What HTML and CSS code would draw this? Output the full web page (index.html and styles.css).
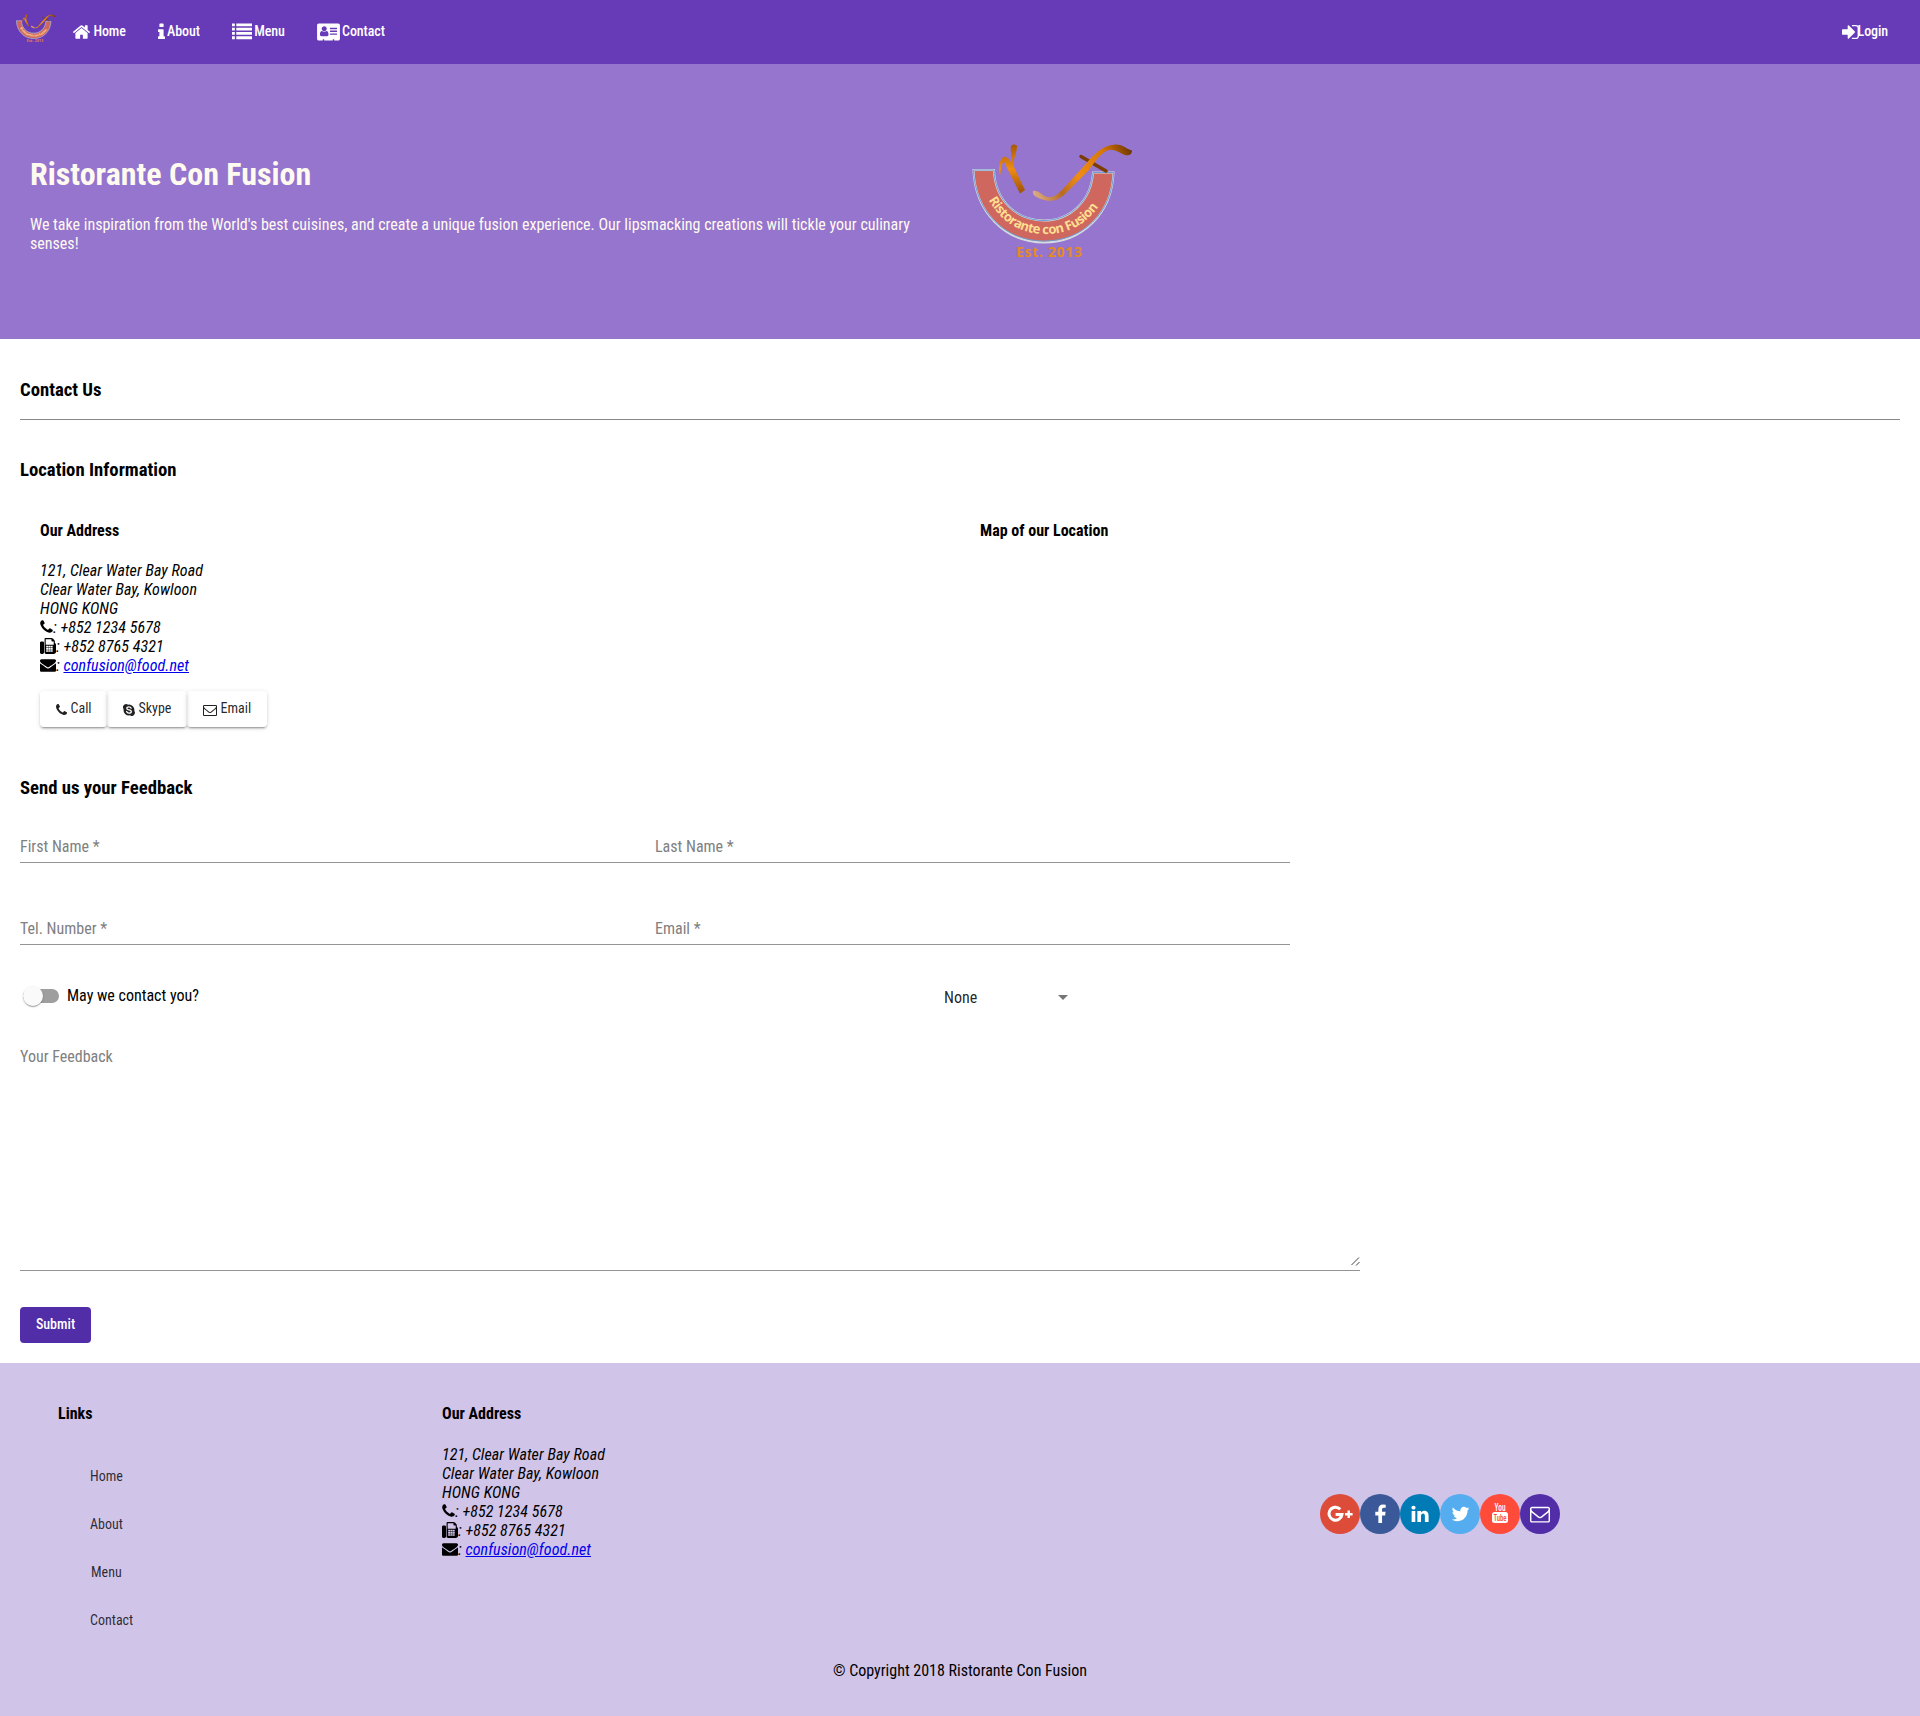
FILE: index.html
```
<!DOCTYPE html>
<html lang="en">
<head>
<meta charset="utf-8">
<title>Ristorante Con Fusion</title>
<link rel="stylesheet" href="styles.css">
</head>
<body>
<svg class="defs" aria-hidden="true">
  <defs>
    <linearGradient id="bronze" x1="0" y1="0" x2="0" y2="1"><stop offset="0" stop-color="#a85a08"/><stop offset=".5" stop-color="#ef8c12"/><stop offset="1" stop-color="#9c5008"/></linearGradient>
    <linearGradient id="handle" gradientUnits="userSpaceOnUse" x1="83" y1="66" x2="182" y2="20"><stop offset="0" stop-color="#dcb08c"/><stop offset=".25" stop-color="#b86a20"/><stop offset=".45" stop-color="#f08c14"/><stop offset=".75" stop-color="#d87808"/><stop offset="1" stop-color="#6e3400"/></linearGradient>
    <path id="arc" d="M38 69C51 92 70 104 96 104C122 104 141 91 153 69"/>
  </defs>
  <symbol id="logo" viewBox="22 13 162 117">
    <path d="M23.500 40H44C45 71 67 90.500 94 90.500C120 90.500 141 71 143 42.500H163.500C162 84 132 112.500 94 112.500C55 112.500 25 82 23.500 40Z" fill="#cf675f" stroke="#d5dbe2" stroke-width="2"/>
    <path d="M23.500 40H44C45 71 67 90.500 94 90.500C120 90.500 141 71 143 42.500H163.500C162 84 132 111 94 111C55 111 25 82 23.500 40Z" fill="none" stroke="#6f9bd0" stroke-width="1"/>
    <path d="M49 44.500C48.500 35 50 29 53.500 27C56 26 59 29 61 32C62 25 60 20 61 16C62 14 66 14 67 16C67 23 63 29 63.500 36L75 60L70 63.500L58 40L54 31.500C51.500 34 51 39 50.500 44.500Z" fill="url(#bronze)"/>
    <path d="M131 26.500L156 41" stroke="#7c3d04" stroke-width="3.500" stroke-linecap="round"/>
    <path d="M83 61C87 59.500 91 64 96 66.500C101 68.500 106 66 111 61L134 36C144 24 153 14.500 166 14.500C173 14.500 178 20 182 20.500C182 24 180 26 175 25C168 22 163 18 157 20.500C149 25 144 33 139 40L114 65C107 71.500 99 72 91 69C85 67 82 64 83 61Z" fill="url(#handle)"/>
  </symbol>
  <symbol id="home" viewBox="0 0 1792 1792"><path d="M1472 992v480q0 26-19 45t-45 19h-384v-384h-256v384h-384q-26 0-45-19t-19-45v-480q0-1 .5-3t.5-3l575-474 575 474q1 2 1 6zm223-69l-62 74q-8 9-21 11h-3q-13 0-21-7l-692-577-692 577q-12 8-24 7-13-2-21-11l-62-74q-8-10-7-23.500t11-21.500l719-599q32-26 76-26t76 26l244 204v-195q0-14 9-23t23-9h192q14 0 23 9t9 23v408l219 182q10 8 11 21.500t-7 23.500z"/></symbol>
  <symbol id="info" viewBox="576 0 640 1792"><path d="M1216 1344v128q0 26-19 45t-45 19h-512q-26 0-45-19t-19-45v-128q0-26 19-45t45-19h64v-384h-64q-26 0-45-19t-19-45v-128q0-26 19-45t45-19h384q26 0 45 19t19 45v576h64q26 0 45 19t19 45zm-128-1152v192q0 26-19 45t-45 19h-256q-26 0-45-19t-19-45v-192q0-26 19-45t45-19h256q26 0 45 19t19 45z"/></symbol>
  <symbol id="list" viewBox="0 0 1792 1792"><path d="M0 128h256v256H0zM384 128h1408v256H384zM0 512h256v256H0zM384 512h1408v256H384zM0 896h256v256H0zM384 896h1408v256H384zM0 1280h256v256H0zM384 1280h1408v256H384z"/></symbol>
  <symbol id="card" viewBox="0 0 2048 1792"><path d="M1024 1131q0-64-9-117.500t-29.500-103-60.500-78-97-28.500q-6 4-30 18t-37.500 21.500-35.500 17.500-43 14.500-42 4.500-42-4.500-43-14.500-35.500-17.500-37.500-21.500-30-18q-57 0-97 28.500t-60.500 78-29.500 103-9 117.500 37 106.500 91 42.500h512q54 0 91-42.500t37-106.500zm-157-520q0-94-66.500-160.500t-160.500-66.500-160.500 66.500-66.500 160.500 66.500 160.500 160.500 66.500 160.500-66.500 66.500-160.500zm925 509v-64q0-14-9-23t-23-9h-576q-14 0-23 9t-9 23v64q0 14 9 23t23 9h576q14 0 23-9t9-23zm0-260v-56q0-15-10.500-25.500t-25.500-10.500h-568q-15 0-25.500 10.500t-10.500 25.500v56q0 15 10.500 25.500t25.500 10.500h568q15 0 25.500-10.500t10.500-25.500zm0-252v-64q0-14-9-23t-23-9h-576q-14 0-23 9t-9 23v64q0 14 9 23t23 9h576q14 0 23-9t9-23zm256-320v1216q0 66-47 113t-113 47h-352v-96q0-14-9-23t-23-9h-64q-14 0-23 9t-9 23v96h-768v-96q0-14-9-23t-23-9h-64q-14 0-23 9t-9 23v96h-352q-66 0-113-47t-47-113v-1216q0-66 47-113t113-47h1728q66 0 113 47t47 113z"/></symbol>
  <symbol id="signin" viewBox="128 0 1536 1792"><path d="M1312 896q0 26-19 45l-544 544q-19 19-45 19t-45-19-19-45v-288h-448q-26 0-45-19t-19-45v-384q0-26 19-45t45-19h448v-288q0-26 19-45t45-19 45 19l544 544q19 19 19 45zm352-352v704q0 119-84.500 203.500t-203.500 84.500h-320q-13 0-22.500-9.500t-9.500-22.500q0-4-1-20t-.5-26.500 3-23.500 10-19.500 20.500-6.500h320q66 0 113-47t47-113v-704q0-66-47-113t-113-47h-312l-11.500-1-11.500-3-8-5.500-7-9-2-13.500q0-4-1-20t-.5-26.500 3-23.500 10-19.500 20.500-6.500h320q119 0 203.500 84.500t84.500 203.500z"/></symbol>
  <symbol id="phone" viewBox="192 0 1408 1792"><path d="M1600 1240q0 27-10 70.500t-21 68.500q-21 50-122 106-94 51-186 51-27 0-53-3.500t-57.500-12.500-47-14.500-55.500-20.500-49-18q-98-35-175-83-127-79-264-216t-216-264q-48-77-83-175-3-9-18-49t-20.500-55.500-14.500-47-12.500-57.500-3.500-53q0-92 51-186 56-101 106-122 25-11 68.500-21t70.500-10q14 0 21 3 18 6 53 76 11 19 30 54t35 63.500 31 53.500q3 4 17.500 25t21.500 35.500 7 28.500q0 20-28.500 50t-62 55-62 53-28.500 46q0 9 5 22.500t8.500 20.500 14 24 11.500 19q76 137 174 235t235 174q2 1 19 11.500t24 14 20.500 8.500 22.500 5q18 0 46-28.500t53-62 55-62 50-28.500q14 0 28.500 7t35.500 21.500 25 17.500q25 15 53.500 31t63.500 35 54 30q70 35 76 53 3 7 3 21z"/></symbol>
  <symbol id="fax" viewBox="0 0 1792 1792"><path fill-rule="evenodd" d="M160 384h128q66 0 113 47t47 113v1088q0 66-47 113t-113 47H160q-66 0-113-47T0 1632V544q0-66 47-113t113-47zM1664 546q58 34 93 93t35 129v768q0 106-75 181t-181 75H672q-66 0-113-47t-47-113V96q0-40 28-68t68-28h672q40 0 88 20t76 48l152 152q28 28 48 76t20 88zM640 128v640h896V384h-160q-40 0-68-28t-28-68V128zM690 870h220v190H690zm256 0h220v190H946zm256 0h220v190h-220zM690 1114h220v190H690zm256 0h220v190H946zm256 0h220v190h-220zM690 1358h220v190H690zm256 0h220v190H946zm256 0h220v190h-220z"/></symbol>
  <symbol id="envelope" viewBox="0 0 1792 1792"><path d="M1792 710v794q0 66-47 113t-113 47h-1472q-66 0-113-47t-47-113v-794q44 49 101 87 362 246 497 345 57 42 92.500 65.500t94.500 48 110 24.500h2q51 0 110-24.500t94.500-48 92.500-65.500q170-123 498-345 57-39 100-87zm0-294q0 79-49 151t-122 123q-376 261-468 325-10 7-42.500 31t-54 38.500-52 32.500-57.500 27-50 9h-2q-23 0-50-9t-57.500-27-52-32.500-54-38.500-42.500-31q-91-64-262-182.500t-205-142.500q-62-42-117-115.500t-55-136.500q0-78 41.500-130t118.500-52h1472q65 0 112.500 47t47.500 113z"/></symbol>
  <symbol id="envelope-o" viewBox="0 0 1792 1792"><path d="M1664 1504v-768q-32 36-69 66-268 206-426 338-51 43-83 67t-86.500 48.500-102.500 24.500h-2q-48 0-102.500-24.500t-86.500-48.500-83-67q-158-132-426-338-37-30-69-66v768q0 13 9.500 22.500t22.500 9.500h1472q13 0 22.500-9.500t9.500-22.500zm0-1051v-24.500l-.5-13-3-12.500-5.500-9-9-7.500-14-2.500h-1472q-13 0-22.500 9.500t-9.500 22.500q0 168 147 284 193 152 401 317 6 5 35 29.500t46 37.500 44.500 31.500 50.500 27.500 43 9h2q20 0 43-9t50.500-27.500 44.500-31.500 46-37.500 35-29.500q208-165 401-317 54-43 100.500-115.500t46.500-131.500zm128-37v1088q0 66-47 113t-113 47h-1472q-66 0-113-47t-47-113v-1088q0-66 47-113t113-47h1472q66 0 113 47t47 113z"/></symbol>
  <symbol id="skype" viewBox="1.500 1.500 21 21"><path d="M7 1.500a5.500 5.500 0 0 1 3.300 1.100A9.500 9.500 0 0 1 21.300 13.700 5.500 5.500 0 0 1 13.700 21.400 9.500 9.500 0 0 1 2.600 10.300 5.500 5.500 0 0 1 7 1.500z"/><path d="M15.800 8.800C15 7.200 13.700 6.600 12 6.600c-2.200 0-3.800 1-3.800 2.600 0 3.500 7.900 1.800 7.900 5.300 0 1.700-1.700 2.900-4.100 2.900-2.200 0-3.600-.9-4.200-2.700" fill="none" stroke="#fff" stroke-width="2.300" stroke-linecap="round"/></symbol>
  <symbol id="facebook" viewBox="479 0 864 1664"><path d="M1343 140v264h-157q-86 0-116 36t-30 108v189h293l-39 296h-254v631h-306v-631h-255v-296h255v-218q0-186 104-288.500t277-102.500q147 0 228 12z"/></symbol>
  <symbol id="linkedin" viewBox="128 0 1536 1792"><path d="M477 625v991h-330v-991h330zm21-306q1 73-50.500 122t-135.500 49h-2q-82 0-132-49t-50-122q0-74 51.500-122.500t134.500-48.500 133 48.500 51 122.500zm1166 729v568h-329v-530q0-105-40.500-164.500t-126.500-59.500q-63 0-105.500 34.500t-63.500 85.500q-11 30-11 81v553h-329q2-399 2-647t-1-296l-1-48h329v144h-2q20-32 41-56t56.500-52 87-43.500 114.500-15.500q171 0 275 113.500t104 332.500z"/></symbol>
  <symbol id="twitter" viewBox="64 0 1664 1792"><path d="M1684 408q-67 98-162 167 1 14 1 42 0 130-38 259.500t-115.500 248.500-184.500 210.500-258 146-323 54.500q-271 0-496-145 35 4 78 4 225 0 401-138-105-2-188-64.500t-114-159.500q33 5 61 5 43 0 85-11-112-23-185.500-111.500t-73.500-205.500v-4q68 38 146 41-66-44-105-115t-39-154q0-88 44-163 121 149 294.500 238.500t371.500 99.500q-8-38-8-74 0-134 94.500-228.500t228.500-94.500q140 0 236 102 109-21 205-78-37 115-142 178 93-10 186-50z"/></symbol>
  <symbol id="gplus" viewBox="0 0 26 20"><path d="M13.300 5.200A6.500 6.500 0 1 0 15 10.500H8.600" fill="none" stroke="#fff" stroke-width="3"/><path d="M21.700 6.500v7.600M18 10.300h7.600" fill="none" stroke="#fff" stroke-width="2.400"/></symbol>
</svg>

<header class="toolbar">
  <svg class="brand" viewBox="22 13 162 117"><use href="#logo" x="22" y="13" width="162" height="117"/><text class="logo-arc"><textPath href="#arc" startOffset="1" textLength="132">Ristorante con Fusion</textPath></text><text class="logo-est" x="66" y="127" textLength="66">Est. 2013</text></svg>
  <nav class="nav">
    <a class="nav-link"><svg class="w19"><use href="#home"/></svg> Home</a>
    <a class="nav-link"><svg class="w7"><use href="#info"/></svg> About</a>
    <a class="nav-link"><svg class="w20"><use href="#list"/></svg> Menu</a>
    <a class="nav-link"><svg class="w23"><use href="#card"/></svg> Contact</a>
  </nav>
  <a class="nav-link login"><svg class="w17"><use href="#signin"/></svg>Login</a>
</header>

<section class="jumbotron">
  <div class="intro">
    <h1>Ristorante Con Fusion</h1>
    <p>We take inspiration from the World's best cuisines, and create a unique fusion experience. Our lipsmacking creations will tickle your culinary senses!</p>
  </div>
  <svg class="hero-logo" viewBox="22 13 162 117"><use href="#logo" x="22" y="13" width="162" height="117"/><text class="logo-arc"><textPath href="#arc" startOffset="1" textLength="132">Ristorante con Fusion</textPath></text><text class="logo-est" x="66" y="127" textLength="66">Est. 2013</text></svg>
</section>

<main class="content">
  <section class="block title-block">
    <h3>Contact Us</h3>
    <hr>
  </section>

  <section class="block">
    <h3>Location Information</h3>
    <div class="location">
      <div class="column">
        <h4>Our Address</h4>
        <address>
          121, Clear Water Bay Road<br>
          Clear Water Bay, Kowloon<br>
          HONG KONG<br>
          <svg class="w13"><use href="#phone"/></svg>: +852 1234 5678<br>
          <svg class="w16"><use href="#fax"/></svg>: +852 8765 4321<br>
          <svg class="w16"><use href="#envelope"/></svg>: <a href="#">confusion@food.net</a>
        </address>
        <div class="actions">
          <a class="raised call"><svg><use href="#phone"/></svg>Call</a>
          <a class="raised skype"><svg><use href="#skype"/></svg>Skype</a>
          <a class="raised email"><svg><use href="#envelope-o"/></svg>Email</a>
        </div>
      </div>
      <div class="column">
        <h4>Map of our Location</h4>
      </div>
    </div>
  </section>

  <section class="feedback">
    <h3>Send us your Feedback</h3>
    <form>
      <div class="fields">
        <div class="field">First Name *</div>
        <div class="field">Last Name *</div>
      </div>
      <div class="fields">
        <div class="field">Tel. Number *</div>
        <div class="field">Email *</div>
      </div>
      <div class="options">
        <label class="toggle"><span class="track"><span class="thumb"></span></span><span class="toggle-text">May we contact you?</span></label>
        <div class="select"><span>None</span><span class="caret"></span></div>
      </div>
      <div class="message">
        <span>Your Feedback</span>
        <svg class="grip" viewBox="0 0 10 10"><path d="M1.500 9L9 1.500M6 9.500L9.500 6" fill="none" stroke="#444" stroke-width="1"/></svg>
      </div>
      <button type="button" class="submit">Submit</button>
    </form>
  </section>
</main>

<footer class="footer">
  <div class="footer-columns">
    <div class="links">
      <h4>Links</h4>
      <ul>
        <li>Home</li>
        <li>About</li>
        <li class="menu-item">Menu</li>
        <li>Contact</li>
      </ul>
    </div>
    <div class="footer-address">
      <h4>Our Address</h4>
      <address>
        121, Clear Water Bay Road<br>
        Clear Water Bay, Kowloon<br>
        HONG KONG<br>
        <svg class="w13"><use href="#phone"/></svg>: +852 1234 5678<br>
        <svg class="w16"><use href="#fax"/></svg>: +852 8765 4321<br>
        <svg class="w16"><use href="#envelope"/></svg>: <a href="#">confusion@food.net</a>
      </address>
    </div>
    <div class="social">
      <a class="round google"><svg class="s-google"><use href="#gplus"/></svg></a>
      <a class="round facebook"><svg class="s-facebook"><use href="#facebook"/></svg></a>
      <a class="round linkedin"><svg class="s-linkedin"><use href="#linkedin"/></svg></a>
      <a class="round twitter"><svg class="s-twitter"><use href="#twitter"/></svg></a>
      <a class="round youtube"><svg class="s-youtube" viewBox="0 0 18 26"><text class="yt-you" x="9" y="11" text-anchor="middle" textLength="11" lengthAdjust="spacingAndGlyphs">You</text><rect x="1" y="12" width="16" height="11" rx="2.500"/><text class="yt-tube" x="9" y="21" text-anchor="middle" textLength="13" lengthAdjust="spacingAndGlyphs">Tube</text></svg></a>
      <a class="round mail"><svg class="s-mail"><use href="#envelope-o"/></svg></a>
    </div>
  </div>
  <p class="copyright">© Copyright 2018 Ristorante Con Fusion</p>
</footer>
</body>
</html>
```
FILE: styles.css
```
* { box-sizing: border-box; }

body {
  margin: 0;
  background: #fff;
  color: #000;
  font: 16px/19px "Roboto Condensed", Roboto, sans-serif;
  font-stretch: 75%;
}

svg { fill: currentColor; flex: none; }
.defs { position: absolute; width: 0; height: 0; }

.w7 { width: 7px; }
.w13 { width: 13px; }
.w16 { width: 16px; }
.w17 { width: 17px; }
.w19 { width: 19px; }
.w20 { width: 20px; }
.w23 { width: 23px; }

.logo-arc { font: 700 13px "Open Sans", sans-serif; fill: #ffdf90; }
.logo-est { font: 700 14px "Open Sans", sans-serif; fill: #e58a1c; }

h1, h3, h4 { font-weight: 700; margin: 0; }
h3 { font-size: 18.72px; line-height: 22px; }
h4 { font-size: 16px; line-height: 19px; }

/* Toolbar */
.toolbar {
  display: flex;
  align-items: center;
  height: 64px;
  padding: 0 16px;
  background: #673ab7;
  color: #fff;
}
.brand { width: 40px; height: 29px; margin-top: -7px; }
.nav { display: flex; }
.nav-link {
  display: flex;
  align-items: center;
  gap: 2.400px;
  height: 36px;
  padding: 0 16px;
  margin-top: -2px;
  font-size: 14px;
  font-weight: 500;
  letter-spacing: -.1px;
  white-space: nowrap;
}
.nav-link svg { height: 20px; margin-top: 1px; }
.login { margin-left: auto; gap: 0; }
.login svg { margin-right: -1px; }

/* Banner */
.jumbotron {
  display: flex;
  gap: 12px;
  height: 275px;
  padding: 79px 30px 70px;
  background: #9575cd;
  color: floralwhite;
}
.intro { width: 930px; padding-top: 12px; }
.intro h1 { font-size: 32px; line-height: 38px; }
.intro p { margin: 21.500px 0 0; }
.hero-logo { width: 162px; height: 117px; }

/* Page body */
.content { padding: 40px 20px 20px; }
.title-block hr { margin: 18px 0 39px; border: 0; border-top: 1px solid #888; }
.location { display: flex; padding: 40px 0 0 20px; }
.column { flex: none; width: 940px; }
.column + .column { width: 900px; }
address {
  margin-top: 21px;
  font-style: italic;
  letter-spacing: .06px;
}
address svg { height: 16px; vertical-align: -2px; }
.actions { display: flex; margin-top: 16px; }
.raised {
  display: flex;
  align-items: center;
  height: 36px;
  padding: 0 16px 1px;
  border-radius: 4px;
  color: rgba(0, 0, 0, .87);
  font-size: 14px;
  box-shadow: 0 3px 1px -2px rgba(0, 0, 0, .2), 0 2px 2px rgba(0, 0, 0, .14), 0 1px 5px rgba(0, 0, 0, .12);
}
.raised svg { height: 14px; margin: 3px 3.500px 0 0; }
.call { width: 67px; }
.call svg { width: 11px; }
.skype { width: 80px; }
.skype svg { width: 12px; height: 12px; }
.email { width: 80px; }
.email svg { width: 14px; }

/* Feedback form */
.feedback { margin-top: 50px; }
.feedback form { padding-top: 37px; }
.fields { display: flex; width: 1270px; height: 82px; }
.field {
  width: 635px;
  height: 27px;
  padding-top: 1px;
  border-bottom: 1px solid #949494;
  color: #808080;
}
.options { display: flex; height: 47px; }
.toggle { display: flex; align-items: center; width: 924px; height: 24px; margin-top: -16px; }
.toggle-text { padding-bottom: 2px; }
.track {
  width: 36px;
  height: 14px;
  margin: 0 8px 0 3px;
  border-radius: 8px;
  background: #9e9e9e;
}
.thumb {
  display: block;
  width: 20px;
  height: 20px;
  margin-top: -3px;
  border-radius: 50%;
  background: #fafafa;
  box-shadow: 0 2px 1px -1px rgba(0, 0, 0, .2), 0 1px 1px rgba(0, 0, 0, .14), 0 1px 3px rgba(0, 0, 0, .12);
}
.select {
  display: flex;
  align-items: center;
  justify-content: space-between;
  width: 124px;
  height: 24px;
  margin-top: -15px;
  color: rgba(0, 0, 0, .87);
}
.caret { border: 5px solid transparent; border-top-color: #757575; border-bottom: 0; }
.message {
  display: flex;
  justify-content: space-between;
  width: 1340px;
  height: 224px;
  border-bottom: 1px solid #949494;
  color: #808080;
}
.grip { width: 10px; height: 10px; align-self: flex-end; margin-bottom: 4px; }
.submit {
  display: block;
  width: 71px;
  height: 36px;
  margin-top: 36px;
  padding: 0 0 2px;
  border: 0;
  border-radius: 4px;
  background: #512da8;
  color: #fff;
  font: inherit;
  font-size: 14px;
  font-weight: 500;
}

/* Footer */
.footer { height: 353px; padding-top: 41px; background: #d1c4e9; }
.footer-columns { display: flex; height: 257px; padding-left: 58px; }
.links { width: 384px; }
.links ul { margin: 29px 0 0 32px; padding: 0; list-style: none; }
.links li { height: 48px; line-height: 48px; font-size: 14px; color: rgba(0, 0, 0, .8); }
.links .menu-item { padding-left: 1px; }
.footer-address { width: 878px; }
.footer-address address { margin-top: 22px; }
.social { display: flex; padding-top: 90px; }
.round {
  display: flex;
  align-items: center;
  justify-content: center;
  width: 40px;
  height: 40px;
  border-radius: 50%;
  color: #fff;
}
.google { background: #dd4b39; }
.facebook { background: #3b5998; }
.linkedin { background: #007bb6; }
.twitter { background: #55acee; }
.youtube { background: #ff4b39; }
.mail { background: #512da8; }
.s-google { width: 26px; height: 20px; }
.s-facebook { width: 11px; height: 20px; margin-left: 1px; margin-top: -2px; }
.s-linkedin { width: 18px; height: 20px; }
.s-twitter { width: 19px; height: 20px; }
.s-youtube { width: 18px; height: 26px; margin-top: -3px; }
.s-mail { width: 20px; height: 20px; }
.yt-you { font: 500 10px/12px "Roboto Condensed", Roboto, sans-serif; }
.yt-tube { font: 500 9px/11px "Roboto Condensed", Roboto, sans-serif; fill: #ff4b39; }
.copyright { margin: 0; text-align: center; }
```
